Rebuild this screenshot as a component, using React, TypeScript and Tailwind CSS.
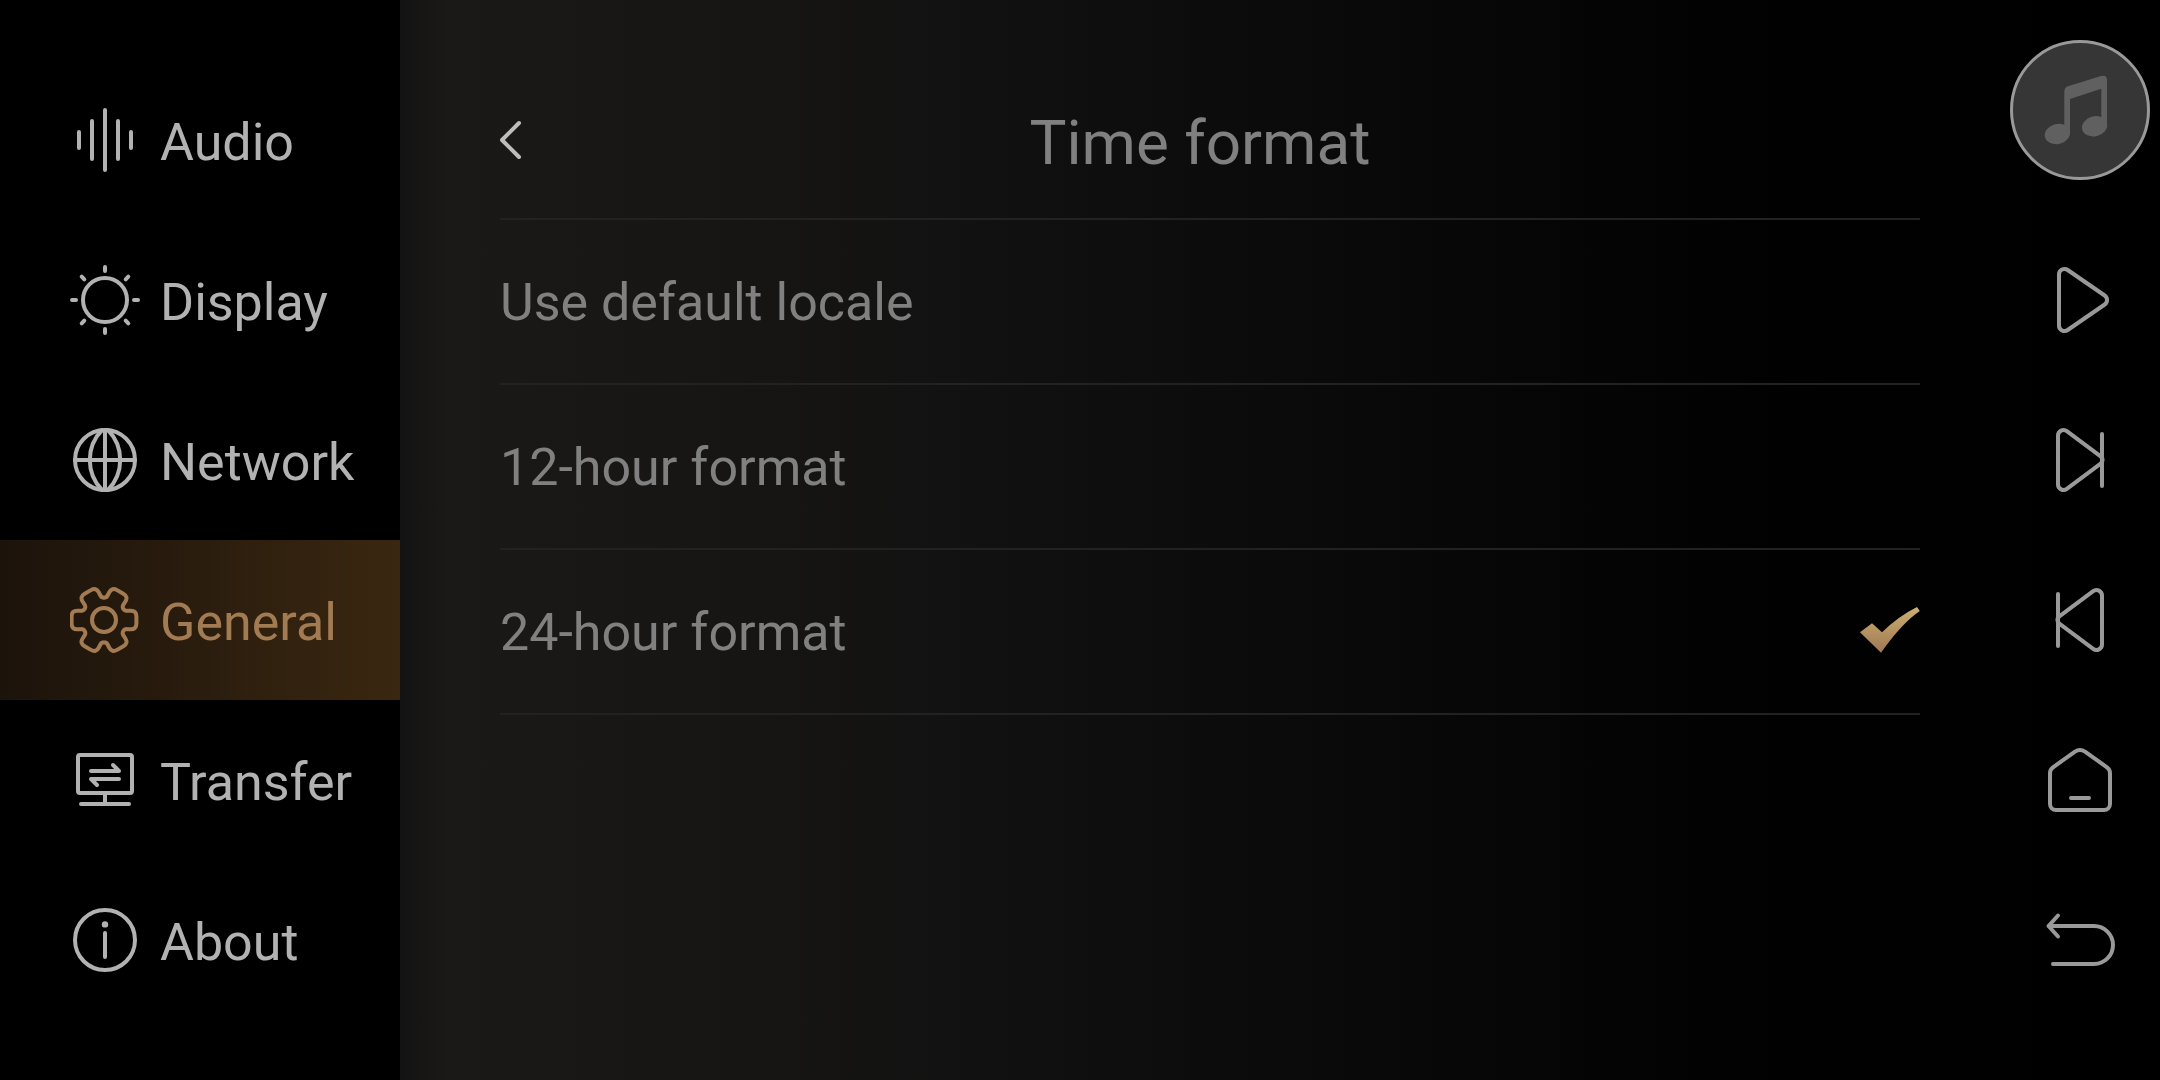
import { useState, type ReactNode } from "react";

type Point = [number, number];

// Builds a closed path through the points, rounding each corner by its cut length.
function roundedPath(points: Point[], cuts: number[]) {
  const n = points.length;
  const toward = (a: Point, b: Point, d: number) => {
    const len = Math.hypot(b[0] - a[0], b[1] - a[1]);
    return `${(a[0] + ((b[0] - a[0]) * d) / len).toFixed(2)} ${(a[1] + ((b[1] - a[1]) * d) / len).toFixed(2)}`;
  };
  return (
    points
      .map((p, i) => {
        const prev = points[(i + n - 1) % n];
        const next = points[(i + 1) % n];
        const cut = cuts[i % cuts.length];
        return `${i === 0 ? "M" : "L"}${toward(p, prev, cut)} Q${p[0].toFixed(2)} ${p[1].toFixed(2)} ${toward(p, next, cut)}`;
      })
      .join(" ") + "Z"
  );
}

const gearPoints: Point[] = [0, 60, 120, 180, 240, 300].flatMap((deg) => {
  const a = (deg * Math.PI) / 180;
  const tooth: Point[] = [
    [20.5, -9],
    [32.4, -9.6],
    [32.4, 9.6],
    [20.5, 9],
  ];
  return tooth.map(([x, y]): Point => [
    35 + x * Math.cos(a) - y * Math.sin(a),
    36 + x * Math.sin(a) + y * Math.cos(a),
  ]);
});
const gearPath = roundedPath(gearPoints, [2.5, 6, 6, 2.5]);

function Icon({ children }: { children: ReactNode }) {
  return (
    <svg
      viewBox="1 1 70 70"
      className="size-[70px] shrink-0"
      fill="none"
      stroke="currentColor"
      strokeWidth="4"
      strokeLinecap="round"
      strokeLinejoin="round"
      aria-hidden="true"
    >
      {children}
    </svg>
  );
}

const sections = [
  {
    name: "Audio",
    icon: <path d="M10 28V44M23 17V55M36 6V66M49 17V55M62 28V44" />,
  },
  {
    name: "Display",
    icon: (
      <>
        <circle cx="36" cy="36" r="22" />
        <path d="M36 3V7M36 65V69M3 36H7M65 36H69M12.7 12.7L15.3 15.3M59.3 12.7L56.7 15.3M12.7 59.3L15.3 56.7M59.3 59.3L56.7 56.7" />
      </>
    ),
  },
  {
    name: "Network",
    icon: (
      <>
        <circle cx="36" cy="36" r="30" />
        <path d="M36 6V66M6 36H66M33 6A43 43 0 0 0 33 66M39 6A43 43 0 0 1 39 66" />
      </>
    ),
  },
  {
    name: "General",
    icon: (
      <>
        <circle cx="35" cy="36" r="12" />
        <path d={gearPath} />
      </>
    ),
  },
  {
    name: "Transfer",
    icon: (
      <>
        <rect x="9" y="11" width="54" height="38" rx="2" />
        <path d="M36 49V60M12 60H60M22 27H50L44 21M50 35H22L28 41" />
      </>
    ),
  },
  {
    name: "About",
    icon: (
      <>
        <circle cx="36" cy="36" r="30" />
        <circle cx="36" cy="20.4" r="3.2" fill="currentColor" stroke="none" />
        <path d="M36 29V53" />
      </>
    ),
  },
];

const skipShape =
  "M14 11.5A5.5 5.5 0 0 1 22.8 7.2L57 32.6Q60 36 57 39.4L22.8 64.8A5.5 5.5 0 0 1 14 60.5ZM58 10V62";

const controls = [
  {
    name: "Play",
    icon: (
      <path d="M15 10.5A5.5 5.5 0 0 1 23.7 6L60.7 31.5A5.5 5.5 0 0 1 60.7 40.5L23.7 66A5.5 5.5 0 0 1 15 61.5Z" />
    ),
  },
  { name: "Next", icon: <path d={skipShape} /> },
  {
    name: "Previous",
    icon: <path d={skipShape} transform="matrix(-1 0 0 1 72 0)" />,
  },
  {
    name: "Home",
    icon: (
      <path d="M6 29Q6 25.5 9 23.3L31 7.6Q36 4.4 41 7.6L63 23.3Q66 25.5 66 29V60A6 6 0 0 1 60 66H12A6 6 0 0 1 6 60ZM27 54H45" />
    ),
  },
  {
    name: "Back",
    icon: <path d="M9 60H50A19 19 0 0 0 50 22H4.5M14 11.5L4.5 22L14 32.5" />,
  },
];

const formats = ["Use default locale", "12-hour format", "24-hour format"];

function CheckMark() {
  return (
    <svg viewBox="0 0 60 60" className="size-15 shrink-0" aria-hidden="true">
      <defs>
        <linearGradient id="gold" x1="0" y1="0" x2="0" y2="1">
          <stop offset="0" stopColor="#cdb071" />
          <stop offset="1" stopColor="#9f7853" />
        </linearGradient>
      </defs>
      <path
        d="M0 30.3L12 21.3L22 30.3Q38 14.5 57 5L59.8 9Q42 21 21 50.7Z"
        fill="url(#gold)"
      />
    </svg>
  );
}

function MusicNote() {
  return (
    <svg viewBox="3 3 134 134" className="size-full" fill="#606060" aria-hidden="true">
      <path d="M54.3 94V51.5Q54.3 47.5 58 46.2L91 35.9Q97 34.6 97 40V86H91.3V48.7L60 59V94Z" />
      <ellipse cx="47.4" cy="94" rx="12.8" ry="10" transform="rotate(-14 47.4 94)" />
      <ellipse cx="84.6" cy="86.3" rx="12.8" ry="10" transform="rotate(-14 84.6 86.3)" />
    </svg>
  );
}

export default function App() {
  const [section, setSection] = useState("General");
  const [format, setFormat] = useState("24-hour format");

  return (
    <div className="flex min-h-screen bg-black font-[Roboto,sans-serif] text-[52px] leading-[60px]">
      <nav aria-label="Settings" className="w-[400px] shrink-0 bg-black py-[60px]">
        {sections.map(({ name, icon }) => (
          <button
            key={name}
            type="button"
            aria-current={section === name ? "page" : undefined}
            onClick={() => setSection(name)}
            className={
              section === name
                ? "flex h-40 w-full items-center gap-5 bg-linear-to-r from-[#1c130b] to-[#3a2710] pl-[70px] text-[#a27b53]"
                : "flex h-40 w-full items-center gap-5 pl-[70px] text-[#b2b2b2]"
            }
          >
            <Icon>{icon}</Icon>
            <span className="pt-1.5">{name}</span>
          </button>
        ))}
      </nav>

      <div className="flex min-w-0 flex-1 bg-[linear-gradient(to_right,#131313_0px,#1a1917_50px,#161513_20%,#121212_31%,#0f0f0f_38%,#090909_55%,#040404_69%,#010101_79%,#000_95%)]">
        <main className="min-w-0 flex-1 pt-[60px] pr-20 pl-[100px]">
          <header className="grid h-40 grid-cols-[1fr_auto_1fr] items-center border-b-2 border-[#222221] pr-5">
            <button type="button" aria-label="Back to General" className="justify-self-start text-[#bdbdbd]">
              <svg
                viewBox="0 0 22 40"
                className="h-10 w-[22px]"
                fill="none"
                stroke="currentColor"
                strokeWidth="4"
                strokeLinecap="round"
                strokeLinejoin="round"
                aria-hidden="true"
              >
                <path d="M19 4L2 21L19 38" />
              </svg>
            </button>
            <h1 className="pt-2 text-[62px] leading-[72px] text-[#808080]">Time format</h1>
          </header>
          <div role="radiogroup" aria-label="Time format">
            {formats.map((name) => (
              <label
                key={name}
                className="flex h-[165px] cursor-pointer items-center justify-between border-b-2 border-[#222221] text-[#808080]"
              >
                <input
                  type="radio"
                  name="time-format"
                  className="sr-only"
                  checked={format === name}
                  onChange={() => setFormat(name)}
                />
                <span className="pt-0.5">{name}</span>
                {format === name && <CheckMark />}
              </label>
            ))}
          </div>
        </main>

        <aside aria-label="Playback" className="flex w-40 shrink-0 flex-col items-center pt-10 text-[#999]">
          <button
            type="button"
            aria-label="Now playing"
            className="mb-10 size-[140px] shrink-0 rounded-full border-3 border-[#999] bg-[#363636]"
          >
            <MusicNote />
          </button>
          {controls.map(({ name, icon }) => (
            <button
              key={name}
              type="button"
              aria-label={name}
              className="flex h-40 w-full items-center justify-center"
            >
              <Icon>{icon}</Icon>
            </button>
          ))}
        </aside>
      </div>
    </div>
  );
}
